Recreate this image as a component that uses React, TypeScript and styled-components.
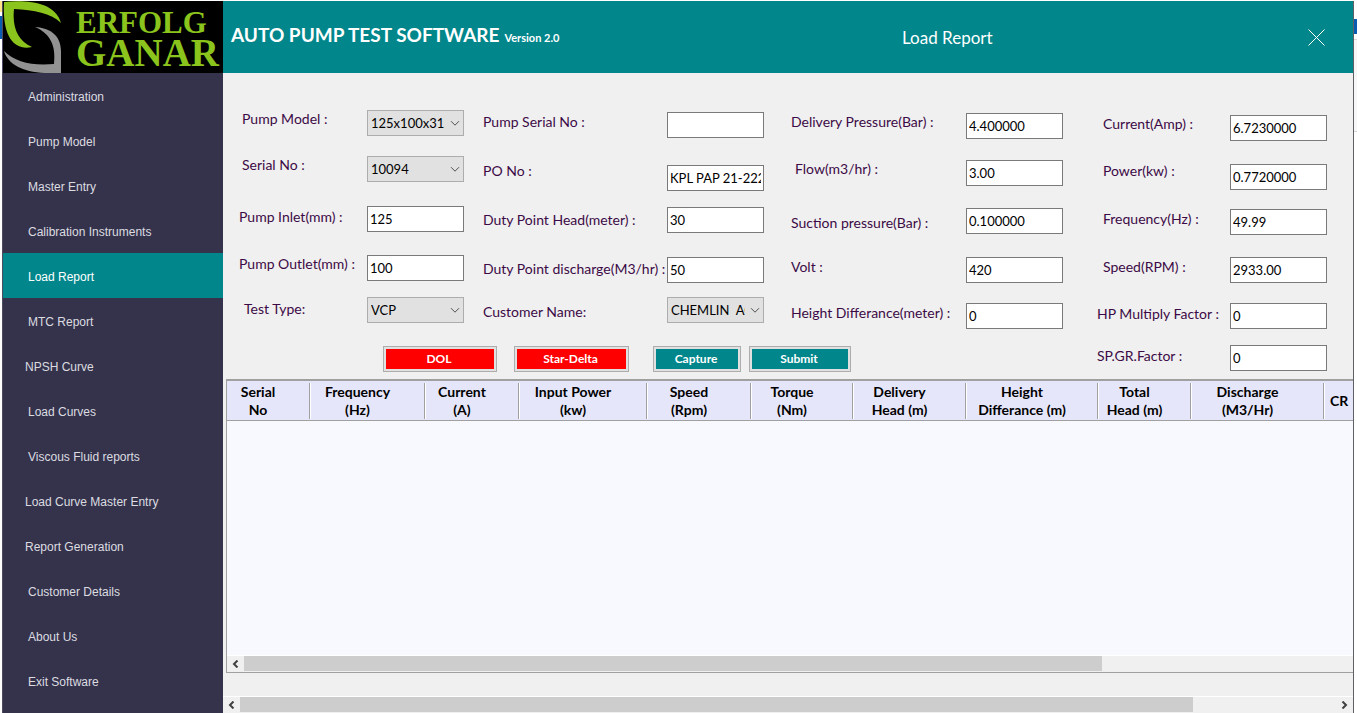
import React from 'react';
import styled, { createGlobalStyle, css } from 'styled-components';

const TEAL = '#00868b';
const NAVY = '#35334c';
const PANEL = '#f0f0f0';
const PLUM = '#3c0a46';
const UI_FONT = 'Lato, "Open Sans", sans-serif';

const GlobalStyle = createGlobalStyle`
  * { box-sizing: border-box; }
  body { margin: 0; background: #fff; font-family: ${UI_FONT}; font-size: 13px; }
  button, input, select { font-family: inherit; font-size: inherit; margin: 0; }
`;

const Desktop = styled.div`
  display: flex;
  min-height: 100vh;
  padding-top: 1px;
  background: #fff;
  overflow: hidden;
`;

const LeftEdge = styled.div`
  flex: none;
  width: 2px;
  background: linear-gradient(#ffe28a 0 11px, #fff 11px 15px, #0a5cb0 15px 38px, #fff 38px);
`;

const RightEdge = styled.div`
  flex: none;
  width: 3px;
  background: linear-gradient(#fff 0 18px, #0a5cb0 18px 33px, #fff 33px 38px, #d8d8d8 38px 39px, #f7f7f7 39px 130px, #d8d8d8 130px 131px, #fff 131px);
`;

const AppWindow = styled.div`
  flex: 1;
  min-width: 0;
  display: flex;
  border-left: 1px solid #4d4b60;
  border-right: 1px solid #5f5f66;
  background: ${PANEL};
`;

const Sidebar = styled.aside`
  flex: none;
  width: 220px;
  background: ${NAVY};
`;

const Logo = styled.div`
  display: flex;
  height: 72px;
  background: #000;
  overflow: hidden;
`;

const LogoMark = styled.svg`
  flex: none;
  width: 60px;
  height: 72px;
`;

const LogoText = styled.div`
  padding: 8px 0 0 13px;
  color: #8ac41c;
  font-family: 'Liberation Serif', serif;
  font-weight: 700;
`;

const LogoLine = styled.div<{ $large?: boolean }>`
  font-size: ${p => (p.$large ? 39 : 31)}px;
  line-height: ${p => (p.$large ? 32 : 28)}px;
`;

const NavLink = styled.a<{ $active?: boolean; $outdent?: boolean }>`
  display: flex;
  align-items: center;
  height: 45px;
  padding: 3px 0 0 ${p => (p.$outdent ? 22 : 25)}px;
  color: ${p => (p.$active ? '#fff' : '#dcdce0')};
  background: ${p => (p.$active ? TEAL : 'transparent')};
  font-family: 'Liberation Sans', sans-serif;
  font-size: 12px;
  text-decoration: none;
`;

const Main = styled.main`
  flex: 1;
  min-width: 0;
  display: flex;
  flex-direction: column;
`;

const Header = styled.header`
  display: flex;
  align-items: center;
  height: 72px;
  padding: 0 28px 0 8px;
  color: #fff;
  background: ${TEAL};
`;

const Brand = styled.div`
  flex: 1;
  display: flex;
  align-items: baseline;
  gap: 5px;
  padding-bottom: 4px;
  font-weight: 700;
`;

const BrandName = styled.h1`
  margin: 0;
  font-size: 19px;
  line-height: 28px;
`;

const Version = styled.span`
  font-size: 11px;
`;

const PageTitle = styled.h2`
  margin: 0;
  flex: none;
  width: 406px;
  font-size: 17px;
  font-weight: 400;
`;

const CloseButton = styled.button`
  display: flex;
  padding: 0;
  border: 0;
  color: #fff;
  background: none;
`;

const Form = styled.form`
  position: relative;
  height: 306px;
`;

const FieldColumns = styled.div`
  display: flex;
  padding: 37px 0 0 16px;
`;

const FieldGroup = styled.div`
  display: flex;
  align-items: flex-start;
`;

const Stack = styled.div<{ $rows: number[]; $top: number; $width: number }>`
  display: grid;
  grid-template-rows: ${p => p.$rows.map(r => `${r}px`).join(' ')};
  align-items: start;
  width: ${p => p.$width}px;
  padding-top: ${p => p.$top}px;
`;

const Label = styled.label<{ $indent?: number }>`
  padding-left: ${p => p.$indent ?? 0}px;
  color: ${PLUM};
  font-size: 14px;
  line-height: 18px;
  white-space: nowrap;
`;

const TextBox = styled.input`
  width: 97px;
  height: 26px;
  padding: 0 2px;
  border: 1px solid #7a7a7a;
  border-radius: 0;
  color: #000;
  background: #fff;
`;

const SelectWrap = styled.div`
  position: relative;
  width: 97px;
  height: 26px;
`;

const Select = styled.select`
  appearance: none;
  width: 100%;
  height: 100%;
  padding: 0 18px 0 3px;
  border: 1px solid #adadad;
  border-radius: 0;
  color: #000;
  background: #e1e1e1;
`;

const SelectArrow = styled.svg`
  position: absolute;
  right: 4px;
  top: 10px;
  pointer-events: none;
`;

const Actions = styled.div`
  position: absolute;
  left: 160px;
  bottom: 7px;
  display: flex;
`;

const ActionButton = styled.button<{ $danger?: boolean; $width: number; $gap: number }>`
  width: ${p => p.$width}px;
  height: 26px;
  margin-right: ${p => p.$gap}px;
  padding: 0 2px 2px 0;
  border: 1px solid #adadad;
  box-shadow: inset 0 0 0 2px #e1e1e1;
  color: #fff;
  background: ${p => (p.$danger ? '#ff0000' : TEAL)};
  font-size: 12px;
  font-weight: 700;
`;

const GridBox = styled.section`
  flex: 1;
  min-height: 120px;
  display: flex;
  flex-direction: column;
  margin-left: 3px;
  border: solid #a0a0a0;
  border-width: 2px 0 1px 1px;
  background: #f8f8ff;
  overflow: hidden;
`;

const GridBody = styled.div`
  flex: 1;
`;

const Table = styled.table`
  width: 100%;
  table-layout: fixed;
  border-collapse: separate;
  border-spacing: 0;
  background: #e6e6fa;
`;

const HeadCell = styled.th<{ $last?: boolean }>`
  height: 40px;
  padding: 0 22px 0 0;
  border-bottom: 1px solid #a0a0a0;
  font-size: 14px;
  line-height: 18px;
  font-weight: 700;
  white-space: pre;
  ${p =>
    p.$last
      ? css`
          padding: 0 0 0 5px;
          text-align: left;
        `
      : css`
          background: linear-gradient(#a0a0a0, #a0a0a0) right 1px top 2px / 1px 36px no-repeat,
            linear-gradient(#fff, #fff) right 0 top 2px / 1px 36px no-repeat;
        `}
`;

const ScrollBar = styled.div`
  flex: none;
  display: flex;
  height: 17px;
  border-top: 1px solid #fff;
  background: ${PANEL};
`;

const ScrollArrow = styled.button`
  flex: none;
  display: flex;
  align-items: center;
  justify-content: center;
  width: 17px;
  padding: 0;
  border: 0;
  color: #404040;
  background: none;
`;

const Thumb = styled.div<{ $share: number }>`
  flex: ${p => p.$share};
  margin-bottom: 1px;
  background: #cdcdcd;
`;

const Track = styled.div<{ $share: number }>`
  flex: ${p => p.$share};
`;

const Spacer = styled.div`
  flex: none;
  height: 23px;
`;

const navItems = [
  { text: 'Administration' },
  { text: 'Pump Model' },
  { text: 'Master Entry' },
  { text: 'Calibration Instruments' },
  { text: 'Load Report', active: true },
  { text: 'MTC Report' },
  { text: 'NPSH Curve', outdent: true },
  { text: 'Load Curves' },
  { text: 'Viscous Fluid reports' },
  { text: 'Load Curve Master Entry', outdent: true },
  { text: 'Report Generation', outdent: true },
  { text: 'Customer Details' },
  { text: 'About Us' },
  { text: 'Exit Software' },
];

type Field = { id: string; label: string; value: string; select?: boolean; indent?: number };
type Group = {
  labelWidth: number;
  boxWidth: number;
  labelTop: number;
  boxTop: number;
  labelRows: number[];
  boxRows: number[];
  fields: Field[];
};

const groups: Group[] = [
  {
    labelWidth: 128,
    boxWidth: 116,
    labelTop: 0,
    boxTop: 0,
    labelRows: [46, 52, 47, 45, 18],
    boxRows: [46, 50, 49, 42, 26],
    fields: [
      { id: 'model', label: 'Pump Model :', value: '125x100x315', select: true, indent: 3 },
      { id: 'serial', label: 'Serial No :', value: '10094', select: true, indent: 3 },
      { id: 'inlet', label: 'Pump Inlet(mm) :', value: '125' },
      { id: 'outlet', label: 'Pump Outlet(mm) :', value: '100' },
      { id: 'test', label: 'Test Type:', value: 'VCP', select: true, indent: 5 },
    ],
  },
  {
    labelWidth: 184,
    boxWidth: 124,
    labelTop: 3,
    boxTop: 2,
    labelRows: [49, 49, 49, 43, 18],
    boxRows: [53, 42, 50, 40, 26],
    fields: [
      { id: 'pserial', label: 'Pump Serial No :', value: '' },
      { id: 'po', label: 'PO No :', value: 'KPL PAP 21-222' },
      { id: 'head', label: 'Duty Point Head(meter) :', value: '30' },
      { id: 'discharge', label: 'Duty Point discharge(M3/hr) :', value: '50' },
      { id: 'customer', label: 'Customer Name:', value: 'CHEMLIN  AQUA', select: true },
    ],
  },
  {
    labelWidth: 175,
    boxWidth: 131,
    labelTop: 3,
    boxTop: 3,
    labelRows: [47, 54, 44, 46, 18],
    boxRows: [47, 48, 49, 46, 26],
    fields: [
      { id: 'pressure', label: 'Delivery Pressure(Bar) :', value: '4.400000' },
      { id: 'flow', label: 'Flow(m3/hr) :', value: '3.00', indent: 4 },
      { id: 'suction', label: 'Suction pressure(Bar) :', value: '0.100000' },
      { id: 'volt', label: 'Volt :', value: '420' },
      { id: 'height', label: 'Height Differance(meter) :', value: '0' },
    ],
  },
  {
    labelWidth: 133,
    boxWidth: 97,
    labelTop: 5,
    boxTop: 5,
    labelRows: [47, 48, 48, 47, 42, 18],
    boxRows: [49, 45, 48, 46, 42, 26],
    fields: [
      { id: 'current', label: 'Current(Amp) :', value: '6.7230000', indent: 6 },
      { id: 'power', label: 'Power(kw) :', value: '0.7720000', indent: 6 },
      { id: 'frequency', label: 'Frequency(Hz) :', value: '49.99', indent: 6 },
      { id: 'speed', label: 'Speed(RPM) :', value: '2933.00', indent: 6 },
      { id: 'hp', label: 'HP Multiply Factor :', value: '0' },
      { id: 'spgr', label: 'SP.GR.Factor :', value: '0' },
    ],
  },
];

const columns: { title: string; width?: number }[] = [
  { title: 'Serial\nNo', width: 84 },
  { title: 'Frequency\n(Hz)', width: 115 },
  { title: 'Current\n(A)', width: 94 },
  { title: 'Input Power\n(kw)', width: 128 },
  { title: 'Speed\n(Rpm)', width: 104 },
  { title: 'Torque\n(Nm)', width: 102 },
  { title: 'Delivery\nHead (m)', width: 113 },
  { title: 'Height\nDifferance (m)', width: 132 },
  { title: 'Total\nHead (m)', width: 93 },
  { title: 'Discharge\n(M3/Hr)', width: 133 },
  { title: 'CR' },
];

const Arrow = ({ right }: { right?: boolean }) => (
  <svg width="7" height="8" viewBox="0 0 7 8" fill="none" stroke="currentColor" strokeWidth="2">
    <path d={right ? 'M1.5 0.5 5 4 1.5 7.5' : 'M5.5 0.5 2 4 5.5 7.5'} />
  </svg>
);

const FieldControl = ({ field }: { field: Field }) =>
  field.select ? (
    <SelectWrap>
      <Select id={field.id} defaultValue={field.value}>
        <option value={field.value}>{field.value.replace(/ /g, '\u00a0')}</option>
      </Select>
      <SelectArrow width="10" height="7" viewBox="0 0 10 7" fill="none" stroke="#505050">
        <path d="M1 1.2 5 5.2 9 1.2" />
      </SelectArrow>
    </SelectWrap>
  ) : (
    <TextBox id={field.id} type="text" defaultValue={field.value} />
  );

export default function App() {
  return (
    <>
      <GlobalStyle />
      <Desktop>
        <LeftEdge />
        <AppWindow>
          <Sidebar>
            <Logo>
              <LogoMark viewBox="0 0 60 72" aria-hidden="true">
                <path
                  fill="#8ac41c"
                  d="M1 1C22-1 52 0 58 22C48 12 31 9 11 8C9 27 15 40 29 46C12 50 -1 37 1 1Z"
                />
                <path
                  fill="#929292"
                  d="M32 26C49 27 58 36 58 50V72H42C19 71 5 63 1 50C12 61 29 65 51 63C53 45 48 33 32 26Z"
                />
              </LogoMark>
              <LogoText>
                <LogoLine>ERFOLG</LogoLine>
                <LogoLine $large>GANAR</LogoLine>
              </LogoText>
            </Logo>
            <nav>
              {navItems.map(item => (
                <NavLink key={item.text} href="#" $active={item.active} $outdent={item.outdent}>
                  {item.text}
                </NavLink>
              ))}
            </nav>
          </Sidebar>
          <Main>
            <Header>
              <Brand>
                <BrandName>AUTO PUMP TEST SOFTWARE</BrandName>
                <Version>Version 2.0</Version>
              </Brand>
              <PageTitle>Load Report</PageTitle>
              <CloseButton type="button" aria-label="Close">
                <svg width="17" height="17" viewBox="0 0 17 17" stroke="currentColor">
                  <path d="M0.5 0.5 16.5 16.5M16.5 0.5 0.5 16.5" />
                </svg>
              </CloseButton>
            </Header>
            <Form>
              <FieldColumns>
                {groups.map(g => (
                  <FieldGroup key={g.fields[0].id}>
                    <Stack $rows={g.labelRows} $top={g.labelTop} $width={g.labelWidth}>
                      {g.fields.map(f => (
                        <Label key={f.id} htmlFor={f.id} $indent={f.indent}>
                          {f.label}
                        </Label>
                      ))}
                    </Stack>
                    <Stack $rows={g.boxRows} $top={g.boxTop} $width={g.boxWidth}>
                      {g.fields.map(f => (
                        <FieldControl key={f.id} field={f} />
                      ))}
                    </Stack>
                  </FieldGroup>
                ))}
              </FieldColumns>
              <Actions>
                <ActionButton type="button" $danger $width={114} $gap={17}>DOL</ActionButton>
                <ActionButton type="button" $danger $width={115} $gap={24}>Star-Delta</ActionButton>
                <ActionButton type="button" $width={88} $gap={8}>Capture</ActionButton>
                <ActionButton type="button" $width={102} $gap={0}>Submit</ActionButton>
              </Actions>
            </Form>
            <GridBox>
              <Table>
                <colgroup>
                  {columns.map(c => (
                    <col key={c.title} width={c.width} />
                  ))}
                </colgroup>
                <thead>
                  <tr>
                    {columns.map(c => (
                      <HeadCell key={c.title} scope="col" $last={!c.width}>
                        {c.title}
                      </HeadCell>
                    ))}
                  </tr>
                </thead>
              </Table>
              <GridBody />
              <ScrollBar>
                <ScrollArrow type="button" aria-label="Scroll table left"><Arrow /></ScrollArrow>
                <Thumb $share={858} />
                <Track $share={251} />
              </ScrollBar>
            </GridBox>
            <Spacer />
            <ScrollBar>
              <ScrollArrow type="button" aria-label="Scroll left"><Arrow /></ScrollArrow>
              <Thumb $share={954} />
              <Track $share={143} />
              <ScrollArrow type="button" aria-label="Scroll right"><Arrow right /></ScrollArrow>
            </ScrollBar>
          </Main>
        </AppWindow>
        <RightEdge />
      </Desktop>
    </>
  );
}
